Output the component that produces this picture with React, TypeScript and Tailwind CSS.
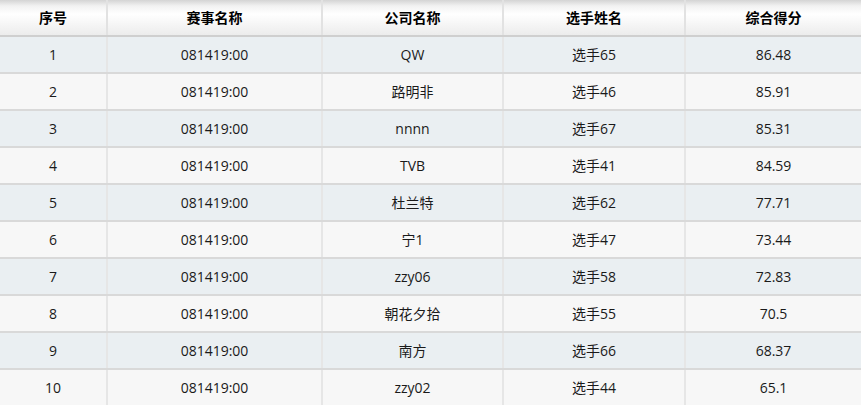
import React from "react";

const rows = [
  ["1", "081419:00", "QW", "选手65", "86.48"],
  ["2", "081419:00", "路明非", "选手46", "85.91"],
  ["3", "081419:00", "nnnn", "选手67", "85.31"],
  ["4", "081419:00", "TVB", "选手41", "84.59"],
  ["5", "081419:00", "杜兰特", "选手62", "77.71"],
  ["6", "081419:00", "宁1", "选手47", "73.44"],
  ["7", "081419:00", "zzy06", "选手58", "72.83"],
  ["8", "081419:00", "朝花夕拾", "选手55", "70.5"],
  ["9", "081419:00", "南方", "选手66", "68.37"],
  ["10", "081419:00", "zzy02", "选手44", "65.1"],
];

const headers = ["序号", "赛事名称", "公司名称", "选手姓名", "综合得分"];

export default function App() {
  return (
    <div
      className="w-[861px] h-[405px] overflow-hidden bg-[#f7f7f7] text-[14px] text-[#1a1a1a]"
      style={{ fontFamily: '"Open Sans", "Noto Sans CJK SC", sans-serif' }}
    >
      <div className="grid grid-cols-[108px_215px_181px_182px_1fr] h-[37px] border-b-2 border-[#cfcfcf] bg-[linear-gradient(to_bottom,#d4d4d4_0px,#f2f2f2_6px,#ffffff_14px,#f4f4f4_26px,#ececec_35px)]">
        {headers.map((h, i) => (
          <div
            key={h}
            className={`flex items-center justify-center font-bold text-black ${
              i < 4 ? "border-r-2 border-[#e2e2e2]" : ""
            }`}
          >
            {h}
          </div>
        ))}
      </div>
      {rows.map((r, ri) => (
        <div
          key={ri}
          className={`grid grid-cols-[108px_215px_181px_182px_1fr] h-[37px] border-b-2 border-[#d9d9d9] ${
            ri % 2 === 0 ? "bg-[#eaeff2]" : "bg-[#f7f7f7]"
          }`}
        >
          {r.map((c, ci) => (
            <div
              key={ci}
              className={`flex items-center justify-center ${
                ci < 4 ? "border-r-2 border-[#e6e6e6]" : ""
              }`}
            >
              {c}
            </div>
          ))}
        </div>
      ))}
    </div>
  );
}
